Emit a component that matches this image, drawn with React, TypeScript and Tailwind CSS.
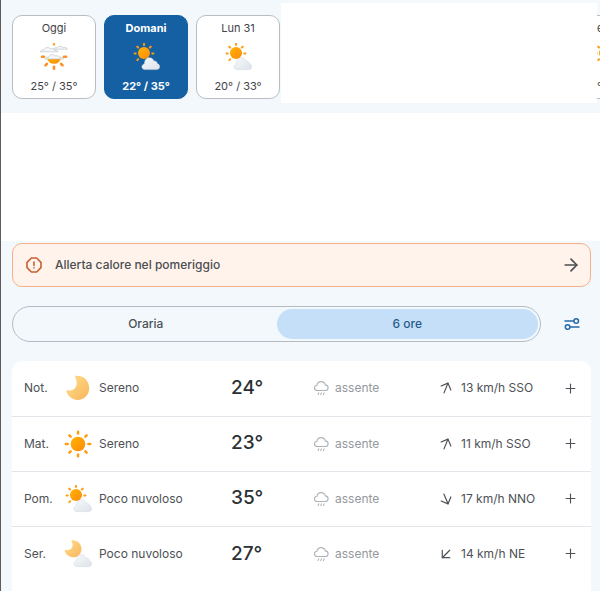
import { useState } from "react";
import type { ReactNode } from "react";
import clsx from "clsx";
import { ArrowRight, ArrowUp, Plus } from "lucide-react";

const RAYS = [0, 45, 90, 135, 180, 225, 270, 315];

const Gradients = () => (
    <svg className="absolute h-0 w-0" aria-hidden="true">
        <defs>
            <linearGradient id="sun" x1="0" y1="0" x2="1" y2="1">
                <stop offset="0" stopColor="#ffb300" />
                <stop offset="1" stopColor="#ff8a0a" />
            </linearGradient>
            <linearGradient id="moon" x1="0" y1="0" x2="1" y2="1">
                <stop offset="0" stopColor="#ffe08c" />
                <stop offset="1" stopColor="#f8b45c" />
            </linearGradient>
            <linearGradient id="cloud" x1="0" y1="0" x2="1" y2="1">
                <stop offset="0" stopColor="#f8fafc" />
                <stop offset="1" stopColor="#dce2e9" />
            </linearGradient>
        </defs>
    </svg>
);

const WeatherSvg = ({ children }: { children: ReactNode }) => (
    <svg viewBox="0 0 28 28" className="h-7 w-7 shrink-0" aria-hidden="true">
        {children}
    </svg>
);

const Cloud = () => (
    <path
        d="M13 26.6C11.1 26.6 9.9 25.4 9.9 23.8C9.9 22.3 11 21.1 12.5 20.9C12.3 17.4 14.4 14.7 17.3 14.7C19.5 14.7 21.1 15.9 21.8 17.9C23.9 17.7 25.3 19 25.3 20.8C26.8 21 27.7 22.2 27.7 23.6C27.7 25.3 26.4 26.6 24.7 26.6Z"
        fill="url(#cloud)"
        stroke="#cfd6de"
        strokeWidth=".5"
    />
);

const SunIcon = () => (
    <WeatherSvg>
        <circle cx="14" cy="14" r="7.3" fill="url(#sun)" />
        {RAYS.map((angle) => (
            <path
                key={angle}
                d="M14 1.8v1.8"
                stroke="#ff9d12"
                strokeWidth="2.5"
                strokeLinecap="round"
                transform={`rotate(${angle} 14 14)`}
            />
        ))}
    </WeatherSvg>
);

const MoonIcon = () => (
    <WeatherSvg>
        <path
            d="M12 1.8C19.5 1.2 25.2 7 25.2 14C25.2 20.8 20.2 26 13.7 26C8.5 26 3.9 22.4 2.4 17.3C2.2 16.5 2.7 16.1 3.4 16.3C8.500 17.500 12.700 13.900 12.700 9.200C12.700 7 12.300 5.200 11.300 3.500C10.800 2.600 11.100 1.900 12 1.800Z"
            fill="url(#moon)"
        />
    </WeatherSvg>
);

const SunCloudIcon = () => (
    <WeatherSvg>
        <circle cx="12" cy="10" r="6" fill="url(#sun)" />
        {RAYS.filter((angle) => angle !== 135 && angle !== 180).map((angle) => (
            <path
                key={angle}
                d="M12 .9v1.2"
                stroke="#ff9d12"
                strokeWidth="2"
                strokeLinecap="round"
                transform={`rotate(${angle} 12 10.4)`}
            />
        ))}
        <Cloud />
    </WeatherSvg>
);

const MoonCloudIcon = () => (
    <WeatherSvg>
        <path
            d="M8.2 .3C13.5 0 17.5 4 17.5 9C17.5 13.7 13.8 17.3 9.2 17.3C5.4 17.3 2 14.8 .8 11.3C.5 10.4 1 9.9 1.8 10.1C5.700 10.900 8.600 8.400 8.600 5.100C8.600 3.800 8.300 2.700 7.600 1.700C7.100 .900 7.400 .400 8.200 .300Z"
            fill="url(#moon)"
        />
        <Cloud />
    </WeatherSvg>
);

const HazeIcon = () => (
    <WeatherSvg>
        <path d="M7 14.500h14a7 6.300 0 0 1-14 0Z" fill="url(#sun)" />
        {[90, 135, 180, 225, 270].map((angle) => (
            <path
                key={angle}
                d="M14 1.800v2"
                stroke="#ff8f26"
                strokeWidth="2.600"
                strokeLinecap="round"
                transform={`rotate(${angle} 14 13.800)`}
            />
        ))}
        <path d="M14 1v.600" stroke="#ffab2e" strokeWidth="2.400" strokeLinecap="round" />
        <g fill="#f4f6f8" stroke="#b9bec5" strokeWidth=".6">
            <path d="M13.500 5.600c1-.900 2.500-1 3.500-.700c1-2 4.500-2.200 5.700-.500c2-.300 4.500.200 4.700 1.800H14Z" />
            <path d="M.300 8.800c.200-1.500 2-2 3.500-1.800c.900-2.700 4.700-3.400 6.500-1.300c1.800-.400 3.400.300 3.800 1.400c1.500-.200 3.600.300 4 1.700Z" />
            <path d="M5 16c.300-1.500 2-2 3.500-1.800c.900-2.800 5-3.500 6.800-1.300c1.800-.400 3.600 0 4.200 1.300c1.600-.200 3.700.300 4 1.800Z" />
        </g>
    </WeatherSvg>
);

const RainIcon = () => (
    <svg viewBox="0 0 16 16" className="h-4 w-4 shrink-0" fill="none" stroke="#b0b3b6" strokeWidth="1.1" strokeLinecap="round" aria-hidden="true">
        <path d="M4.5 10.5C2.5 10.5 1.5 9.4 1.5 7.9C1.5 6.5 2.5 5.4 3.9 5.3C4.3 3.1 5.9 1.6 8.1 1.6C10.3 1.6 11.8 2.9 12.3 4.9C14 5 15.1 6.2 15.1 7.7C15.1 9.3 13.9 10.5 12.3 10.5Z" />
        <path d="M5.7 12.8l-.6 1.8M8.4 12.8l-.6 1.8M11.1 12.8l-.6 1.8" />
    </svg>
);

const AlertIcon = () => (
    <svg viewBox="0 0 16 16" className="h-4 w-4" fill="none" stroke="#c9602f" strokeWidth="1.6" strokeLinecap="round" strokeLinejoin="round" aria-hidden="true">
        <path d="M5.4 1h5.2L15 5.4v5.2L10.6 15H5.4L1 10.6V5.4Z" />
        <path d="M8 5v3.4M8 10.8v.1" />
    </svg>
);

const SlidersIcon = () => (
    <svg viewBox="0 0 16 16" className="h-4 w-4" fill="none" stroke="#2668a8" strokeWidth="1.5" strokeLinecap="round" aria-hidden="true">
        <path d="M1 5h8.5M6.500 11H15" />
        <circle cx="12.2" cy="5" r="2.3" />
        <circle cx="3.6" cy="11" r="2.3" />
    </svg>
);

const DAYS = [
    { name: "Oggi", range: "25° / 35°", icon: <HazeIcon /> },
    { name: "Domani", range: "22° / 35°", icon: <SunCloudIcon /> },
    { name: "Lun 31", range: "20° / 33°", icon: <SunCloudIcon /> },
];

const ROWS = [
    { time: "Not.", sky: "Sereno", icon: <MoonIcon />, temp: "24°", wind: "13 km/h SSO", arrow: "rotate-[22deg]" },
    { time: "Mat.", sky: "Sereno", icon: <SunIcon />, temp: "23°", wind: "11 km/h SSO", arrow: "rotate-[22deg]" },
    { time: "Pom.", sky: "Poco nuvoloso", icon: <SunCloudIcon />, temp: "35°", wind: "17 km/h NNO", arrow: "rotate-[157deg]" },
    { time: "Ser.", sky: "Poco nuvoloso", icon: <MoonCloudIcon />, temp: "27°", wind: "14 km/h NE", arrow: "rotate-[225deg]" },
];

const DayPicker = () => {
    const [active, setActive] = useState(1);

    return (
        <nav className="flex h-[113px] bg-[#f2f8fc] pl-[11px]">
            <div className="flex gap-2 pt-[15px]">
                {DAYS.map((day, i) => (
                    <button
                        key={day.name}
                        type="button"
                        onClick={() => setActive(i)}
                        className={clsx(
                            "flex h-[84px] w-[84px] flex-col items-center justify-between rounded-[10px] border py-1 text-[11px] leading-4",
                            i === active
                                ? "border-[#1460a3] bg-[#1460a3] font-bold text-white"
                                : "border-[#b9bdc1] bg-white text-[#3f4347]",
                        )}
                    >
                        <span>{day.name}</span>
                        {day.icon}
                        <span>{day.range}</span>
                    </button>
                ))}
            </div>
            <div className="mt-[3px] ml-px h-[100px] flex-1 bg-white" />
            <div className="w-[3px] overflow-hidden pt-[15px]">
                <button
                    type="button"
                    className="flex h-[84px] w-7 flex-col items-start justify-between border-y border-[#b9bdc1] bg-white py-1 text-[11px] leading-4 text-[#3f4347]"
                >
                    <span>e</span>
                    <span className="-ml-1">
                        <SunCloudIcon />
                    </span>
                    <span>°</span>
                </button>
            </div>
        </nav>
    );
};

const RangeSwitch = () => {
    const [range, setRange] = useState("6 ore");

    return (
        <div className="flex flex-1 rounded-full border border-[#b5bbc1] p-[2px]">
            {["Oraria", "6 ore"].map((label) => (
                <button
                    key={label}
                    type="button"
                    onClick={() => setRange(label)}
                    className={clsx(
                        "h-[30px] flex-1 rounded-full text-[12px] font-medium",
                        range === label ? "bg-[#c4dff7] text-[#295a8a]" : "text-[#4d5155]",
                    )}
                >
                    {label}
                </button>
            ))}
        </div>
    );
};

const ForecastTable = () => (
    <div className="overflow-hidden rounded-t-[10px] bg-white pb-4">
        <table className="w-full table-fixed text-left text-[12px] text-[#4d5155]">
            <colgroup>
                <col className="w-[52px]" />
                <col />
                <col className="w-[82px]" />
                <col className="w-[124px]" />
                <col className="w-[120px]" />
                <col className="w-[34px]" />
            </colgroup>
            <tbody>
                {ROWS.map((row) => (
                    <tr key={row.time} className="h-[55px] border-b border-[#e2e6ea] last:border-0">
                        <th scope="row" className="pl-3 font-normal">{row.time}</th>
                        <td>
                            <div className="flex items-center gap-[7px]">
                                {row.icon}
                                {row.sky}
                            </div>
                        </td>
                        <td className="text-[19px] font-medium text-[#2c3034]">{row.temp}</td>
                        <td>
                            <div className="flex items-center gap-[6px] text-[#94989c]">
                                <RainIcon />
                                assente
                            </div>
                        </td>
                        <td>
                            <div className="flex items-center gap-[6px]">
                                <ArrowUp size={18} strokeWidth={1.6} className={clsx("shrink-0", row.arrow)} />
                                {row.wind}
                            </div>
                        </td>
                        <td>
                            <button type="button" aria-label={`Dettagli ${row.time}`} className="block pl-[6px]">
                                <Plus size={15} strokeWidth={1.8} />
                            </button>
                        </td>
                    </tr>
                ))}
            </tbody>
        </table>
    </div>
);

export default function App() {
    return (
        <div className="min-h-screen border-l border-[#5d5b5c] bg-white font-['Inter',sans-serif]">
            <Gradients />
            <DayPicker />
            <main className="mt-32 bg-[#f2f8fc] pt-[2px] pr-[9px] pl-[11px]">
                <a
                    href="#allerta"
                    className="flex h-11 items-center rounded-[10px] border border-[#f7b088] bg-[#fff3eb] pr-[9px] pl-[13px] text-[12px] font-medium text-[#4a4e52]"
                >
                    <AlertIcon />
                    <span className="flex-1 pl-[13px]">Allerta calore nel pomeriggio</span>
                    <ArrowRight size={20} strokeWidth={2} />
                </a>
                <div className="mt-[19px] mb-[19px] flex items-center">
                    <RangeSwitch />
                    <button type="button" aria-label="Filtri" className="pr-[11px] pl-[23px]">
                        <SlidersIcon />
                    </button>
                </div>
                <ForecastTable />
            </main>
        </div>
    );
}
